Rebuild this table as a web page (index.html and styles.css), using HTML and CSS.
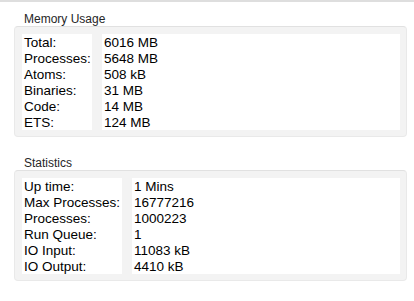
FILE: index.html
```html
<!DOCTYPE html>
<html>
<head>
<meta charset="utf-8">
<link rel="stylesheet" href="styles.css">
</head>
<body>
<div class="topbar"></div>
<section class="group group-memory">
  <div class="group-title">Memory Usage</div>
  <div class="group-box">
    <div class="col col-keys">
      <div>Total:</div>
      <div>Processes:</div>
      <div>Atoms:</div>
      <div>Binaries:</div>
      <div>Code:</div>
      <div>ETS:</div>
    </div>
    <div class="col col-values">
      <div>6016 MB</div>
      <div>5648 MB</div>
      <div>508 kB</div>
      <div>31 MB</div>
      <div>14 MB</div>
      <div>124 MB</div>
    </div>
  </div>
</section>
<section class="group group-stats">
  <div class="group-title">Statistics</div>
  <div class="group-box">
    <div class="col col-keys">
      <div>Up time:</div>
      <div>Max Processes:</div>
      <div>Processes:</div>
      <div>Run Queue:</div>
      <div>IO Input:</div>
      <div>IO Output:</div>
    </div>
    <div class="col col-values">
      <div>1 Mins</div>
      <div>16777216</div>
      <div>1000223</div>
      <div>1</div>
      <div>11083 kB</div>
      <div>4410 kB</div>
    </div>
  </div>
</section>
</body>
</html>
```

FILE: styles.css
```css
html, body {
  margin: 0;
  padding: 0;
  background: #ffffff;
  font-family: "Liberation Sans", Arial, sans-serif;
  color: #000;
}

.topbar {
  height: 2px;
  background: #dedede;
}

.group {
  margin: 0 7px 0 14px;
}

.group-memory {
  padding-top: 10px;
}

.group-stats {
  padding-top: 19px;
}

.group-title {
  font-size: 12px;
  line-height: 14px;
  color: #262626;
  padding-left: 10px;
}

.group-box {
  display: flex;
  gap: 10px;
  background: #f3f3f3;
  border: 1px solid #e9e9e9;
  border-top-color: #e1e1e1;
  border-radius: 4px;
  padding: 7px 6px 6px 7px;
}

.col {
  background: #ffffff;
  font-size: 13.5px;
  line-height: 16px;
  padding: 1px 2px 0 2px;
  height: 95px;
  white-space: nowrap;
}

.group-memory .col-keys {
  width: 66px;
}

.group-stats .col-keys {
  width: 96px;
}

.col-values {
  flex: 1;
}
```
